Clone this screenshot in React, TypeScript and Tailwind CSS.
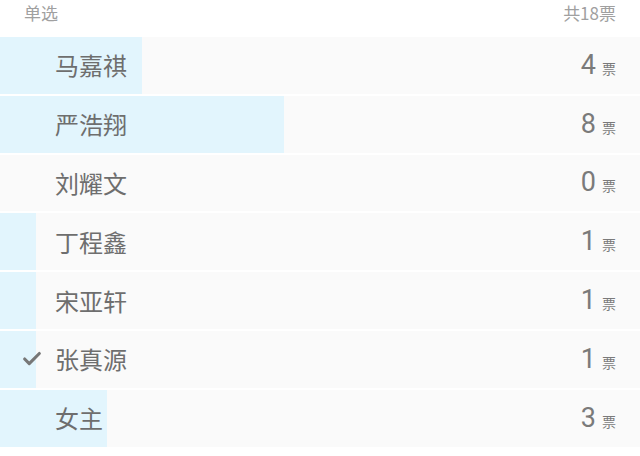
import { Check } from "lucide-react";

const options = [
  { name: "马嘉祺", votes: 4 },
  { name: "严浩翔", votes: 8 },
  { name: "刘耀文", votes: 0 },
  { name: "丁程鑫", votes: 1 },
  { name: "宋亚轩", votes: 1 },
  { name: "张真源", votes: 1, picked: true },
  { name: "女主", votes: 3 },
];

const total = 18;

export default function App() {
  return (
    <div className="w-[640px] h-[456px] overflow-hidden bg-white font-['Noto_Sans_CJK_SC',sans-serif]">
      <div className="h-[37px] -mt-[6px] px-6 flex items-center justify-between text-[17px] text-[#a0a0a0]">
        <span>单选</span>
        <span>共18票</span>
      </div>
      <div className="mt-[6px] flex flex-col gap-[2px]">
        {options.map((o) => (
          <div key={o.name} className="relative h-[56.8px] bg-[#fafafa]">
            <div
              className="absolute left-0 top-0 bottom-0 bg-[#e2f5fd]"
              style={{ width: `${(o.votes / total) * 100}%` }}
            />
            <div className="relative h-full flex items-center pl-6 pr-6">
              <div className="w-[31px] flex items-center">
                {o.picked && <Check size={22} strokeWidth={3.4} className="-ml-[3px] text-[#777]" />}
              </div>
              <span className="text-[24px] text-[#6e6e6e] leading-none">{o.name}</span>
              <div className="ml-auto flex items-baseline gap-[6px] text-[#7a7a7a]">
                <span className="text-[27px] font-['Roboto',sans-serif] leading-none">{o.votes}</span>
                <span className="text-[14px] leading-none">票</span>
              </div>
            </div>
          </div>
        ))}
      </div>
    </div>
  );
}
